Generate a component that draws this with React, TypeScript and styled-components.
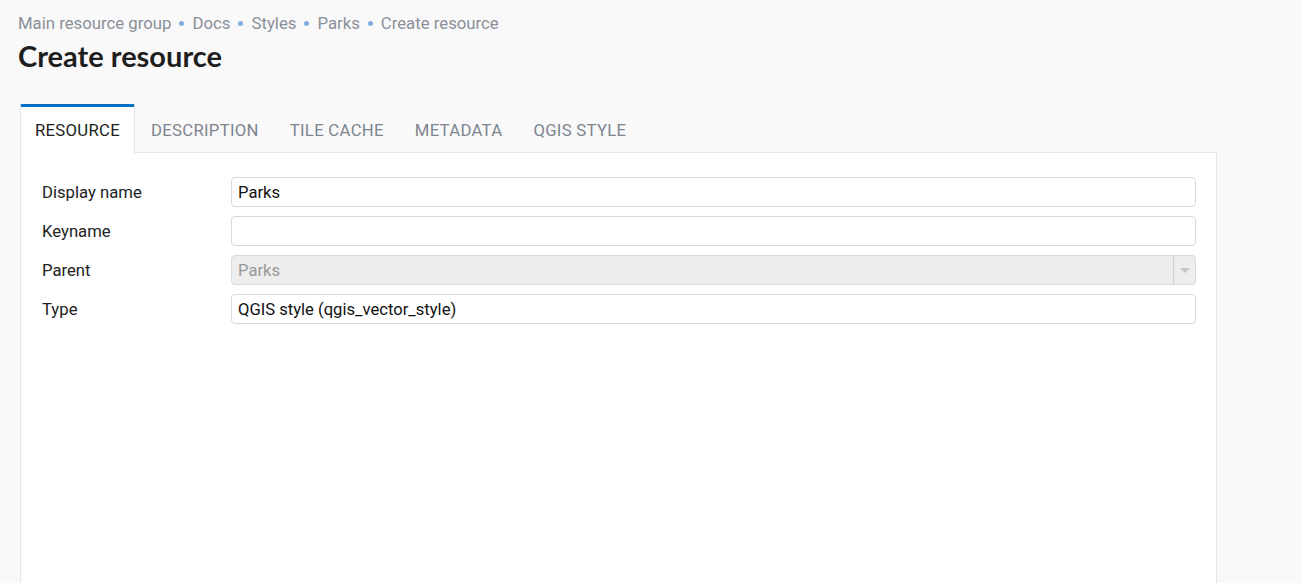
import React from "react";
import styled, { createGlobalStyle } from "styled-components";

const Global = createGlobalStyle`
  html, body { margin: 0; padding: 0; background: #f9f9f9; }
  body { font-family: Roboto, "Liberation Sans", sans-serif; color: #222; }
  * { box-sizing: border-box; }
`;

const Page = styled.div`
  padding: 12px 85px 0 18px;
  min-height: 583px;
  display: flex;
  flex-direction: column;
`;

const Breadcrumbs = styled.nav`
  display: flex;
  align-items: center;
  font-size: 16.75px;
  line-height: 22px;
  color: #8a9099;
`;

const Crumb = styled.span``;

const Sep = styled.span`
  display: inline-block;
  width: 5px;
  height: 5px;
  border-radius: 50%;
  background: #7fb0dc;
  margin: 0 8px;
`;

const Title = styled.h1`
  margin: 4px 0 0 0;
  font-family: Lato, sans-serif;
  font-weight: 700;
  font-size: 29px;
  line-height: 36px;
  color: #1e1e1e;
`;

const Tabs = styled.div`
  margin: 30px 0 0 2px;
  display: flex;
  flex-direction: column;
  flex: 1;
`;

const TabBar = styled.div`
  display: flex;
  align-items: stretch;
  height: 48px;
`;

const Tab = styled.div<{ $active?: boolean }>`
  display: flex;
  align-items: center;
  padding: 1px 14px 0 14px;
  margin-right: 1px;
  font-size: 16.7px;
  letter-spacing: 0.3px;
  text-transform: uppercase;
  color: ${(p) => (p.$active ? "#1e1e1e" : "#7d8590")};
  background: ${(p) => (p.$active ? "#ffffff" : "transparent")};
  border-top: 3px solid ${(p) => (p.$active ? "#0070c5" : "transparent")};
  border-left: 1px solid ${(p) => (p.$active ? "#e6e6e6" : "transparent")};
  border-right: 1px solid ${(p) => (p.$active ? "#e6e6e6" : "transparent")};
  border-radius: 2px 2px 0 0;
  position: relative;
  z-index: 1;
  margin-bottom: -1px;
`;

const Panel = styled.div`
  flex: 1;
  background: #fff;
  border: 1px solid #e6e6e6;
  border-bottom: none;
  padding: 24px 20px 0 21px;
`;

const Form = styled.div`
  display: grid;
  grid-template-columns: 189px 1fr;
  row-gap: 9px;
  align-items: center;
`;

const Label = styled.label`
  font-size: 16.7px;
  color: #222;
`;

const Input = styled.div<{ $disabled?: boolean }>`
  height: 30px;
  border: 1px solid #d9d9d9;
  border-radius: 4px;
  background: ${(p) => (p.$disabled ? "#ededed" : "#fff")};
  color: ${(p) => (p.$disabled ? "#9a9a9a" : "#111")};
  font-size: 16.6px;
  display: flex;
  align-items: center;
  padding-left: 6px;
  overflow: hidden;
`;

const SelectValue = styled.span`
  flex: 1;
`;

const Arrow = styled.span`
  width: 22px;
  align-self: stretch;
  border-left: 1px solid #d0d0d0;
  display: flex;
  align-items: center;
  justify-content: center;
  &::after {
    content: "";
    border-left: 5px solid transparent;
    border-right: 5px solid transparent;
    border-top: 5px solid #c4c4c4;
  }
`;

export default function App() {
  const crumbs = ["Main resource group", "Docs", "Styles", "Parks", "Create resource"];
  const tabs = ["Resource", "Description", "Tile cache", "Metadata", "QGIS style"];
  return (
    <>
      <Global />
      <Page>
        <Breadcrumbs>
          {crumbs.map((c, i) => (
            <React.Fragment key={c}>
              {i > 0 && <Sep />}
              <Crumb>{c}</Crumb>
            </React.Fragment>
          ))}
        </Breadcrumbs>
        <Title>Create resource</Title>
        <Tabs>
          <TabBar>
            {tabs.map((t, i) => (
              <Tab key={t} $active={i === 0}>
                {t}
              </Tab>
            ))}
          </TabBar>
          <Panel>
            <Form>
              <Label>Display name</Label>
              <Input>Parks</Input>
              <Label>Keyname</Label>
              <Input />
              <Label>Parent</Label>
              <Input $disabled>
                <SelectValue>Parks</SelectValue>
                <Arrow />
              </Input>
              <Label>Type</Label>
              <Input>QGIS style (qgis_vector_style)</Input>
            </Form>
          </Panel>
        </Tabs>
      </Page>
    </>
  );
}
